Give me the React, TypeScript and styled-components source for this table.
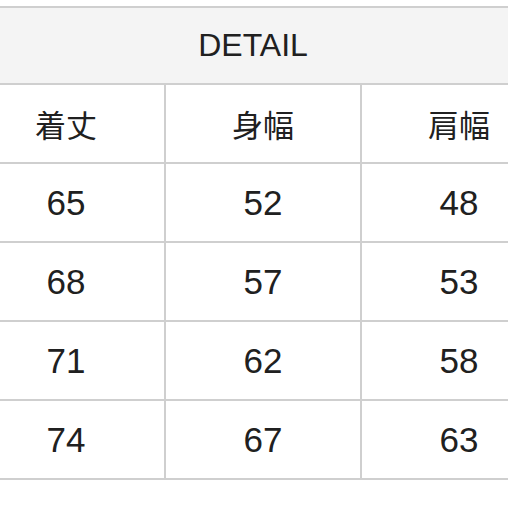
import React from "react";
import styled, { createGlobalStyle } from "styled-components";

const GlobalStyle = createGlobalStyle`
  html, body {
    margin: 0;
    padding: 0;
    background: #ffffff;
  }
`;

const Frame = styled.div`
  width: 508px;
  height: 508px;
  overflow: hidden;
  padding-top: 6px;
  box-sizing: border-box;
`;

const Table = styled.table`
  border-collapse: collapse;
  margin-left: -34px;
  width: 590px;
  table-layout: fixed;
  font-family: "Liberation Sans", "Noto Sans CJK JP", sans-serif;
  color: #202020;
`;

const Col = styled.col<{ $w: number }>`
  width: ${(p) => p.$w}px;
`;

const HeadCell = styled.th`
  height: 75px;
  background: #f4f4f4;
  border: 2px solid #cfcfcf;
  font-weight: 400;
  font-size: 32px;
  text-align: center;
  vertical-align: middle;
  padding: 0 18px 0 0;
`;

const Cell = styled.td<{ $jp?: boolean }>`
  height: 77px;
  border: 2px solid #cfcfcf;
  text-align: center;
  vertical-align: middle;
  padding: 0;
  font-size: ${(p) => (p.$jp ? "31px" : "35px")};
  font-family: ${(p) =>
    p.$jp
      ? `"Noto Sans CJK JP", sans-serif`
      : `"Liberation Sans", sans-serif`};
`;

const labels = ["着丈", "身幅", "肩幅"];
const rows = [
  ["65", "52", "48"],
  ["68", "57", "53"],
  ["71", "62", "58"],
  ["74", "67", "63"],
];

export default function App() {
  return (
    <Frame>
      <GlobalStyle />
      <Table>
        <colgroup>
          <Col $w={198} />
          <Col $w={196} />
          <Col $w={196} />
        </colgroup>
        <thead>
          <tr>
            <HeadCell colSpan={3}>DETAIL</HeadCell>
          </tr>
        </thead>
        <tbody>
          <tr>
            {labels.map((l) => (
              <Cell key={l} $jp>
                {l}
              </Cell>
            ))}
          </tr>
          {rows.map((r, i) => (
            <tr key={i}>
              {r.map((v, j) => (
                <Cell key={j}>{v}</Cell>
              ))}
            </tr>
          ))}
        </tbody>
      </Table>
    </Frame>
  );
}
